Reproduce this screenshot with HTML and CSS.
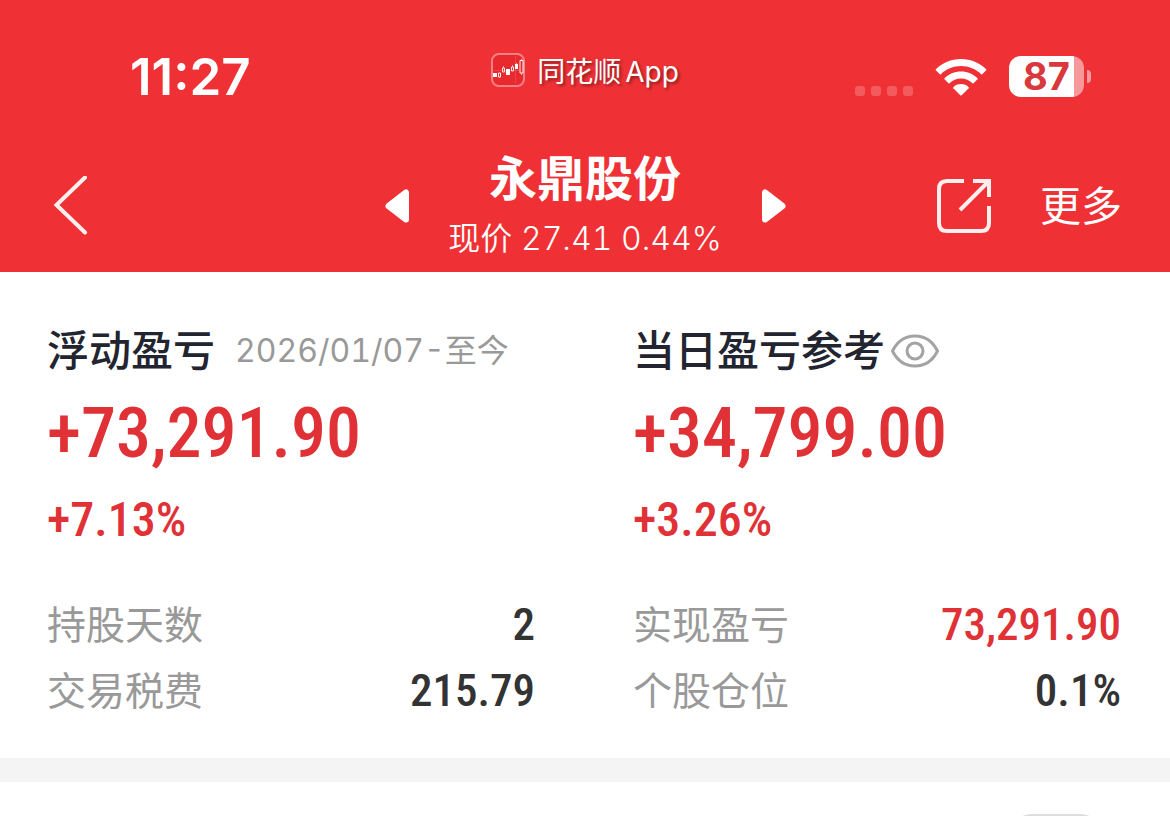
FILE: index.html
```html
<!DOCTYPE html>
<html lang="zh-CN">
<head>
    <meta charset="UTF-8">
    <meta name="viewport" content="width=device-width, initial-scale=1.0">
    <title>永鼎股份</title>
    <link rel="stylesheet" href="styles.css">
</head>
<body>

<header>
    <div class="status-bar">
        <div class="time">11:27</div>
        <div class="app-name">
            <svg width="34" height="34" viewBox="0 0 34 34" fill="none">
                <rect x="1" y="1" width="32" height="32" rx="7" fill="#e8292e" stroke="#fff" stroke-opacity=".4" stroke-width="2"/>
                <path d="M24.5 3v28M3 17.500h28" stroke="#fff" stroke-opacity=".12"/>
                <path d="M2 20h4v4H2zM15 16h4v6h-4zM24 11h3v5h-3z" fill="#fff"/>
                <path d="M7.500 20h2v4h-2zM11.500 15h2v4h-2zM20.500 14h2v4h-2zM29 7.500h3v12.500h-3z" stroke="#fff" stroke-opacity=".9"/>
                <path d="M12.500 13v2M8.500 24v1M21.500 12v2M25.500 10v1M30.500 6v2M30.500 20v2" stroke="#fff" stroke-opacity=".6"/>
            </svg>
            <span>同花顺<span class="latin">App</span></span>
        </div>
        <div class="status-icons">
            <div class="signal"><i></i><i></i><i></i><i></i></div>
            <svg class="wifi" width="52" height="40" viewBox="0 0 52 40" fill="#fff">
                <path d="M26 2C35.800 2 44.800 5.800 51.200 12.200Q51.600 12.700 51.200 13.200L47.200 17.200Q46.700 17.600 46.200 17.200C40.800 12 33.800 9 26 9S11.200 12 5.800 17.200Q5.300 17.600 4.800 17.200L.8 13.200Q.4 12.700 .8 12.200C7.200 5.800 16.200 2 26 2Z"/>
                <path d="M26 14.500C32.500 14.500 38.300 17 42.500 21.200Q43 21.700 42.500 22.200L38.500 26.200Q38 26.600 37.500 26.200C34.400 23.200 30.500 21.500 26 21.500S17.600 23.200 14.500 26.200Q14 26.600 13.500 26.200L9.500 22.200Q9 21.700 9.500 21.200C13.700 17 19.500 14.500 26 14.500Z"/>
                <path d="M26 27C29 27 31.800 28.200 33.700 30.200Q34.100 30.700 33.700 31.200L26.700 38.200Q26 38.700 25.300 38.200L18.300 31.200Q17.900 30.700 18.300 30.200C20.200 28.200 23 27 26 27Z"/>
            </svg>
            <div class="battery">87</div>
        </div>
    </div>

    <nav>
        <button class="back" aria-label="返回">
            <svg width="36" height="60" viewBox="0 0 36 60" fill="none" stroke="#fff" stroke-opacity=".92" stroke-width="4" stroke-linecap="round">
                <path d="M33 1.500L4.500 29L33 56.500"/>
            </svg>
        </button>
        <div class="switcher">
            <button aria-label="上一只">
                <svg width="24" height="34" viewBox="0 0 24 34" fill="#fff" stroke="#fff" stroke-width="6" stroke-linejoin="round">
                    <path d="M21 3.500V30.500L3.500 17Z"/>
                </svg>
            </button>
            <div class="stock">
                <h1>永鼎股份</h1>
                <p>现价 27.41 0.44%</p>
            </div>
            <button aria-label="下一只">
                <svg width="24" height="34" viewBox="0 0 24 34" fill="#fff" stroke="#fff" stroke-width="6" stroke-linejoin="round">
                    <path d="M3 3.500V30.500L20.500 17Z"/>
                </svg>
            </button>
        </div>
        <div class="actions">
            <button aria-label="分享">
                <svg width="56" height="56" viewBox="0 0 56 56" fill="none" stroke="#fff" stroke-opacity=".92" stroke-width="4">
                    <path d="M28 3H11Q3 3 3 11V45Q3 53 11 53H45Q53 53 53 45V28"/>
                    <path d="M37 3H53V19M52 4L24 32"/>
                </svg>
            </button>
            <a href="#">更多</a>
        </div>
    </nav>
</header>

<main>
    <section class="summary">
        <div class="column">
            <h2>浮动盈亏 <small>2026/01/07-至今</small></h2>
            <p class="amount">+73,291.90</p>
            <p class="percent">+7.13%</p>
            <dl>
                <div><dt>持股天数</dt><dd>2</dd></div>
                <div><dt>交易税费</dt><dd>215.79</dd></div>
            </dl>
        </div>
        <div class="column">
            <h2>当日盈亏参考
                <button aria-label="隐藏金额">
                    <svg width="48" height="34" viewBox="0 0 48 34" fill="none" stroke="#a3a3a3" stroke-width="3">
                        <path d="M1.500 17C6.500 7 15 2 24 2S41.500 7 46.500 17C41.500 27 33 32 24 32S6.500 27 1.500 17Z"/>
                        <circle cx="24" cy="17" r="8"/>
                    </svg>
                </button>
            </h2>
            <p class="amount">+34,799.00</p>
            <p class="percent">+3.26%</p>
            <dl>
                <div><dt>实现盈亏</dt><dd class="up">73,291.90</dd></div>
                <div><dt>个股仓位</dt><dd>0.1%</dd></div>
            </dl>
        </div>
    </section>
    <section class="records">
        <div class="pill"></div>
    </section>
</main>

</body>
</html>
```

FILE: styles.css
```css
* {
    box-sizing: border-box;
}

body {
    margin: 0;
    height: 100vh;
    display: flex;
    flex-direction: column;
    font-family: Inter, "Noto Sans CJK SC", sans-serif;
    background-color: #fff;
    color: #333;
}

h1, h2, p, dl, dd {
    margin: 0;
}

button {
    padding: 0;
    border: none;
    background: none;
    cursor: pointer;
}

svg {
    display: block;
}

header {
    background-color: #ef3135;
    color: #fff;
}

.status-bar {
    display: grid;
    grid-template-columns: 1fr auto 1fr;
    align-items: center;
    height: 140px;
    padding: 13px 86px 0;
}

.time {
    margin-left: 44px;
    font-size: 51px;
    font-weight: 600;
}

.app-name {
    display: flex;
    align-items: center;
    gap: 12px;
    margin-bottom: 14px;
    font-size: 28px;
    text-shadow: 2px 2px 3px rgba(0, 0, 0, 0.4);
}

.latin {
    margin-left: 4px;
}

.status-icons {
    display: flex;
    justify-content: flex-end;
    align-items: center;
    gap: 22px;
}

.signal {
    display: flex;
    gap: 6px;
    margin-top: 28px;
}

.signal i {
    width: 10px;
    height: 10px;
    border-radius: 3px;
    background-color: rgba(255, 255, 255, 0.2);
}

.battery {
    position: relative;
    width: 75px;
    height: 41px;
    border-radius: 12px;
    background: linear-gradient(to right, #fff 65px, rgba(255, 255, 255, 0.5) 65px);
    color: #d9383c;
    font-size: 38px;
    font-weight: 700;
    line-height: 41px;
    text-align: center;
}

.battery::after {
    content: "";
    position: absolute;
    top: 14px;
    right: -7px;
    width: 4px;
    height: 13px;
    border-radius: 0 4px 4px 0;
    background-color: rgba(255, 255, 255, 0.5);
}

nav {
    display: grid;
    grid-template-columns: 1fr auto 1fr;
    align-items: center;
    height: 132px;
    padding: 0 48px;
}

.back {
    justify-self: start;
}

.back svg {
    margin-left: 4px;
}

.switcher {
    display: flex;
    align-items: center;
}

.stock {
    width: 353px;
    padding-top: 2px;
    text-align: center;
}

h1 {
    font-size: 48px;
    font-weight: 700;
    line-height: 64px;
}

.stock p {
    font-size: 32px;
    font-weight: 350;
    font-variant-numeric: tabular-nums;
    line-height: 56px;
}

.actions {
    display: flex;
    justify-content: flex-end;
    align-items: center;
    gap: 48px;
}

.actions a {
    color: #fff;
    font-size: 41px;
    font-weight: 400;
    line-height: 56px;
    text-decoration: none;
}

.summary {
    display: grid;
    grid-template-columns: 1fr 1fr;
    gap: 98px;
    padding: 51px 49px 34px 47px;
    border-bottom: 24px solid #f4f4f4;
}

h2 {
    display: flex;
    align-items: center;
    gap: 6px;
    color: #222530;
    font-size: 42px;
    font-weight: 500;
    line-height: 56px;
}

h2 small {
    margin-left: 14px;
    color: #999;
    font-size: 32px;
    font-weight: 400;
    font-variant-numeric: tabular-nums;
}

.amount, .percent, dd {
    font-family: "Roboto Condensed", "Liberation Sans Narrow", Roboto, sans-serif;
    font-weight: 500;
}

.amount, .percent, .up {
    color: #e03236;
}

.amount {
    font-size: 70px;
    line-height: 108px;
}

.percent {
    font-size: 48px;
    line-height: 66px;
}

dl {
    margin-top: 39px;
}

dl div {
    display: flex;
    justify-content: space-between;
    font-size: 39px;
    line-height: 66px;
}

dt {
    color: #999;
    font-weight: 400;
}

dd {
    font-size: 45px;
}

main {
    flex: 1;
    display: flex;
    flex-direction: column;
    min-height: 0;
}

.records {
    flex: 1;
    display: flex;
    justify-content: flex-end;
    overflow: hidden;
    padding: 32px 66px 0;
}

.pill {
    width: 96px;
    height: 48px;
    flex-shrink: 0;
    border: 2px solid #ddd;
    border-radius: 24px;
}
```
